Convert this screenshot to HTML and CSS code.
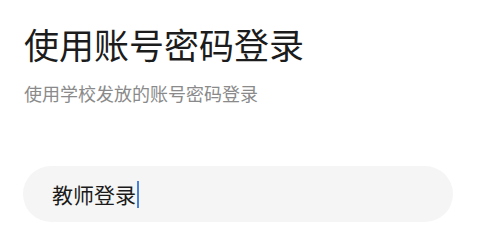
FILE: index.html
```html
<!DOCTYPE html>
<html lang="zh-CN">
<head>
<meta charset="utf-8">
<link rel="stylesheet" href="styles.css">
</head>
<body>
<main class="page">
  <h1 class="title">使用账号密码登录</h1>
  <p class="subtitle">使用学校发放的账号密码登录</p>
  <div class="field">
    <span class="value">教师登录</span><span class="caret"></span>
  </div>
</main>
</body>
</html>
```
FILE: styles.css
```css
html, body {
  margin: 0;
  padding: 0;
  background: #ffffff;
}
.page {
  font-family: "Noto Sans CJK SC", "Noto Sans", sans-serif;
  padding: 24px 27px 0 23px;
  display: flex;
  flex-direction: column;
}
.title {
  margin: 0;
  padding-left: 1px;
  font-size: 35px;
  line-height: 40px;
  font-weight: 400;
  color: #1c1c1c;
}
.subtitle {
  margin: 17px 0 0 0;
  padding-left: 1px;
  font-size: 18px;
  line-height: 24px;
  font-weight: 400;
  color: #8a8a8a;
}
.field {
  margin-top: 61px;
  height: 56px;
  border-radius: 28px;
  background: #f5f5f5;
  display: flex;
  align-items: center;
  padding-left: 29px;
}
.value {
  font-size: 21px;
  line-height: 28px;
  color: #1a1a1a;
}
.caret {
  width: 2px;
  height: 27px;
  margin-left: 1px;
  background: #4a7fd6;
}
```
